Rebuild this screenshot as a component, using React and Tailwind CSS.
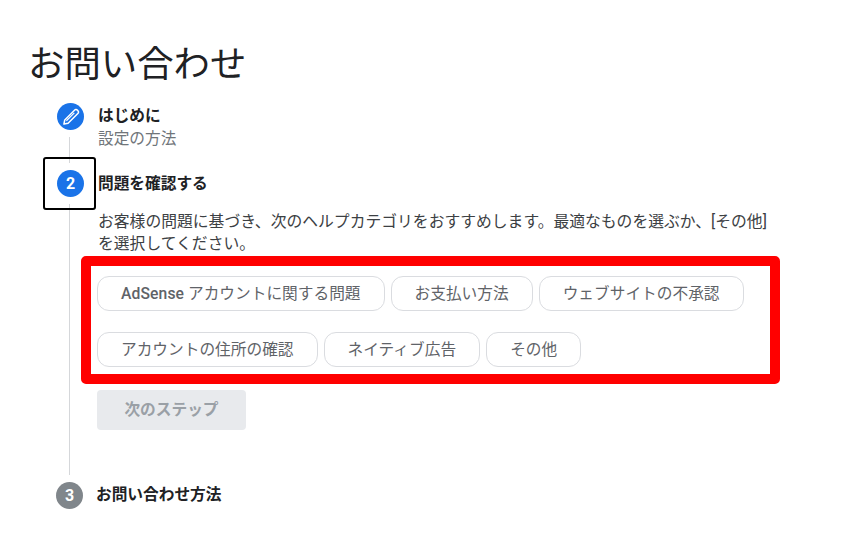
const chips = ["AdSense", "お支払い方法", "ウェブサイトの不承認", "アカウントの住所の確認", "ネイティブ広告", "その他"];

function Chip({ children }) {
  return (
    <button className="h-[35px] px-[23px] rounded-[12px] border border-[#dadce0] bg-white text-[15.7px] leading-[33px] text-[#5f6368] whitespace-nowrap">
      {children}
    </button>
  );
}

function Line() {
  return <div className="w-px flex-1 -translate-x-px bg-[#d5d7da] my-[7px]" />;
}

export default function App() {
  return (
    <div className="h-[554px] w-[854px] overflow-hidden bg-white text-[#202124] font-['Roboto','Noto_Sans_CJK_JP',sans-serif]">
      <h1 className="pl-[28px] pt-[41px] text-[36.4px] leading-[48px] font-normal">お問い合わせ</h1>
      <div className="mt-[14px] ml-[57px] w-[712px]">
        <div className="flex h-[67px] gap-[14px]">
          <div className="flex w-[27px] flex-col items-center">
            <div className="flex size-[27px] items-center justify-center rounded-full bg-[#1a73e8]">
              <svg width="20" height="20" viewBox="0 0 24 24" fill="none" stroke="white" strokeWidth="1.8" strokeLinejoin="round">
                <path d="M3.5 20.5 L4.5 15.5 L16.5 3.5 C17.3 2.7 18.7 2.9 19.8 4 C21 5.2 21.3 6.6 20.5 7.5 L8.5 19.5 Z" />
                <path d="M6.5 16.5 L16 7" strokeWidth="1.4" />
              </svg>
            </div>
            <Line />
          </div>
          <div className="text-[15.7px] leading-[23px] pt-px">
            <div className="font-bold">はじめに</div>
            <div className="text-[#70757a]">設定の方法</div>
          </div>
        </div>
        <div className="flex h-[312px] gap-[14px]">
          <div className="relative flex w-[27px] flex-col items-center">
            <div className="flex size-[27px] items-center justify-center rounded-full bg-[#1a73e8] text-[16px] font-bold text-white">2</div>
            <Line />
            <div className="absolute -left-[14px] -top-[13px] size-[53px] rounded-[3px] border-2 border-black" />
          </div>
          <div className="flex-1">
            <div className="text-[15.7px] leading-[23px] pt-[2px] font-bold">問題を確認する</div>
            <p className="mt-[16px] text-[15.8px] leading-[22px] text-[#3c4043]">
              お客様の問題に基づき、次のヘルプカテゴリをおすすめします。最適なものを選ぶか、[その他] を選択してください。
            </p>
            <div className="relative mt-[21px] -ml-px flex flex-wrap gap-x-[6px] gap-y-[21px]">
              <Chip><span className="font-medium tracking-[0.1px]">AdSense</span> アカウントに関する問題</Chip>
              {chips.slice(1).map((c) => (
                <Chip key={c}>{c}</Chip>
              ))}
              <div className="absolute -left-[16px] -top-[20px] h-[128px] w-[699px] rounded-[5px] border-[10px] border-[#ff0000]" />
            </div>
            <button className="mt-[23px] -ml-px block h-[40px] w-[149px] rounded-[4px] bg-[#e8eaed] text-[15.7px] font-bold text-[#9aa0a6]">次のステップ</button>
          </div>
        </div>
        <div className="-ml-px flex items-center gap-[13px]">
          <div className="flex size-[27px] items-center justify-center rounded-full bg-[#80868b] text-[16px] font-bold text-white">3</div>
          <div className="-translate-y-px text-[15.7px] font-bold leading-[23px]">お問い合わせ方法</div>
        </div>
      </div>
    </div>
  );
}
